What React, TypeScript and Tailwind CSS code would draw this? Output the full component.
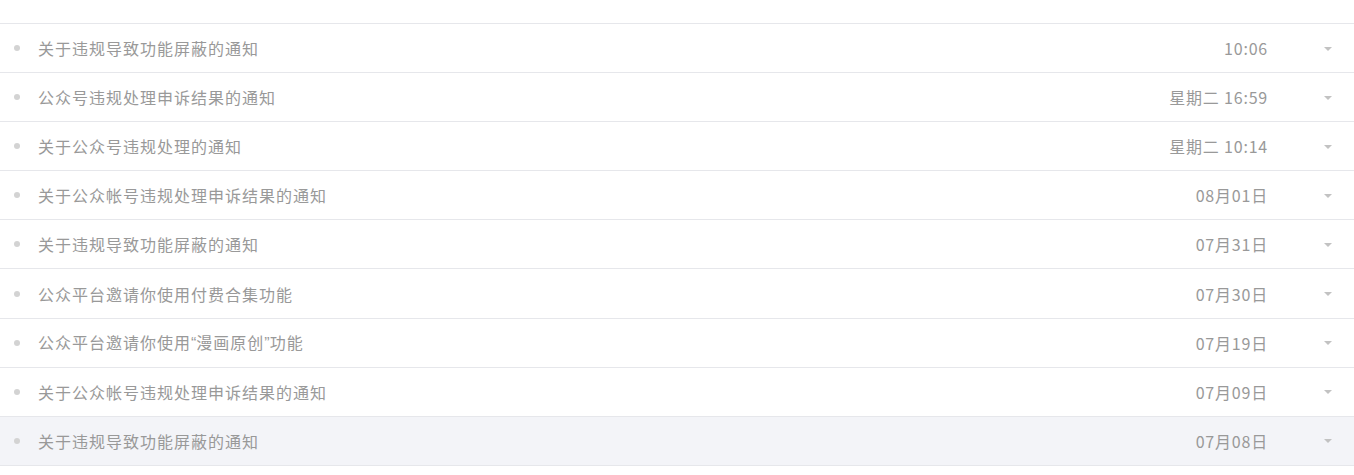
const items = [
  { title: '关于违规导致功能屏蔽的通知', time: '10:06' },
  { title: '公众号违规处理申诉结果的通知', time: '星期二 16:59' },
  { title: '关于公众号违规处理的通知', time: '星期二 10:14' },
  { title: '关于公众帐号违规处理申诉结果的通知', time: '08月01日' },
  { title: '关于违规导致功能屏蔽的通知', time: '07月31日' },
  { title: '公众平台邀请你使用付费合集功能', time: '07月30日' },
  { title: '公众平台邀请你使用“漫画原创”功能', time: '07月19日' },
  { title: '关于公众帐号违规处理申诉结果的通知', time: '07月09日' },
  { title: '关于违规导致功能屏蔽的通知', time: '07月08日', active: true },
];

// Latin quote marks render narrow, as in the original
function Title({ text }: { text: string }) {
  const parts = text.split(/([“”])/);
  return (
    <>
      {parts.map((p, i) =>
        p === '“' || p === '”' ? (
          <span key={i} className="tracking-normal" style={{ fontFamily: '"Liberation Sans", sans-serif' }}>
            {p}
          </span>
        ) : (
          <span key={i}>{p}</span>
        )
      )}
    </>
  );
}

export default function App() {
  return (
    <div
      className="w-[1354px] h-[475px] bg-white pt-[23px]"
      style={{ fontFamily: '"Noto Sans CJK SC", "Microsoft YaHei", sans-serif' }}
    >
      <ul className="border-t border-[#e6e7eb]">
        {items.map((item, i) => (
          <li
            key={i}
            className={`flex items-center h-[49.1px] border-b border-[#e6e7eb] text-[16px] text-[#999999] ${
              item.active ? 'bg-[#f3f4f8]' : ''
            }`}
          >
            <span className="w-[38px] flex justify-center pr-[5px] shrink-0">
              <span className="w-[6px] h-[6px] rounded-full bg-[#d3d3d3]" />
            </span>
            <span className="flex-1 tracking-[1px]">
              <Title text={item.title} />
            </span>
            <span className="tracking-[0.8px]">{item.time}</span>
            <span className="w-[86px] flex justify-center pl-[34px] pt-[1px] shrink-0">
              <span className="w-0 h-0 border-l-[4px] border-r-[4px] border-t-[4px] border-l-transparent border-r-transparent border-t-[#c2c2c2]" />
            </span>
          </li>
        ))}
      </ul>
    </div>
  );
}
